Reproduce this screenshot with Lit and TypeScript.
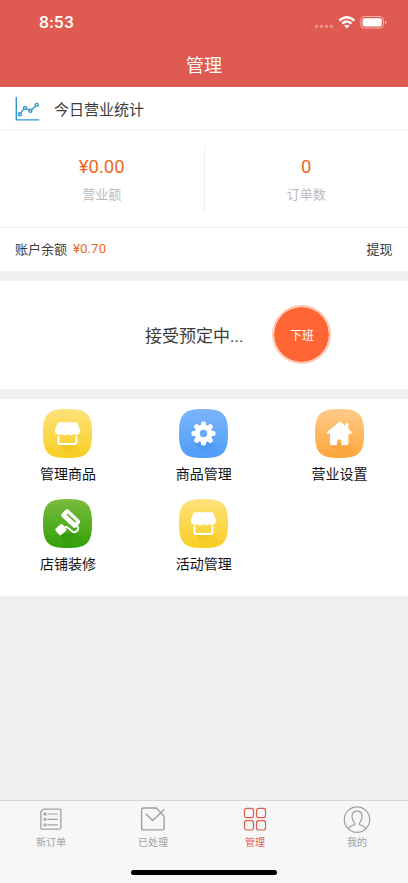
import { LitElement, html, css, svg } from "lit";
import { customElement, property } from "lit/decorators.js";
import { classMap } from "lit/directives/class-map.js";

const SQUIRCLE =
  "M24.5 0C44 0 49 5 49 24.5C49 44 44 49 24.5 49C5 49 0 44 0 24.5C0 5 5 0 24.5 0Z";

type Tile = { icon: string; label: string };

const FILLS: Record<string, [string, string, string]> = {
  shop: ["#fde27a", "#f8ce22", "#e9ba10"],
  gear: ["#7ab4fb", "#519dfa", "#4289e6"],
  home: ["#fecb8a", "#fda63a", "#ec9429"],
  paint: ["#79bc3c", "#33a109", "#268c08"],
};

const GLYPHS: Record<string, unknown> = {
  shop: svg`
    <path class="white" d="M16 13.3H32.8Q33.7 13.3 34.2 14.1L36.6 19.8Q37.1 21 36.9 22.3A3.9 3.7 0 0 1 30.5 24.9A4 3.7 0 0 1 24.4 24.9A4 3.7 0 0 1 18.3 24.9A3.9 3.7 0 0 1 11.9 22.3Q11.8 21 12.3 19.8L14.6 14.1Q15.1 13.3 16 13.3Z"/>
    <path class="line" stroke-width="2" d="M15.5 27.6V33.4Q15.5 34.9 17 34.9H31.9Q33.4 34.9 33.4 33.4V27.6"/>`,
  gear: svg`
    <g transform="translate(24.5 24.5)">
      ${[0, 45, 90, 135].map(
        (a) => svg`<rect class="white" x="-2.5" y="-12" width="5" height="24" rx="1.8" transform="rotate(${a})"/>`
      )}
      <circle class="white" r="8.9"/>
      <circle r="3.7" fill="#68a9fa"/>
    </g>`,
  home: svg`
    <path class="white" d="M25.5 12.8Q24.8 12.3 24.1 12.9L12.3 22.8Q11.6 23.5 12.2 24.2Q12.6 24.7 13.4 24.7H15V34.6Q15 36.3 16.6 36.3H21.9V32.3Q21.9 30.3 24.1 30.3Q26.4 30.3 26.4 32.3V36.3H31.9Q33.4 36.3 33.4 34.6V24.7H35.5Q36.4 24.7 36.8 24Q37.1 23.4 36.4 22.7L33.4 20V15.2Q33.4 14.2 32.4 14.2H31.3Q30.3 14.2 30.3 15.2V17.1Z"/>`,
  paint: svg`
    <g transform="translate(27.8 19.6) rotate(43)">
      <rect class="white" x="-9.8" y="-4.9" width="19.6" height="9.8" rx="2.6"/>
      <rect x="-6" y="-1.6" width="12" height="1.6" rx=".8" fill="#5aae25"/>
    </g>
    <path class="line" stroke-width="1.9" d="M34.4 27L35.2 28.9Q35.6 30.4 34.3 31.5L32.4 32.9Q31 33.7 29.7 32.7L24.7 28.6Q23.4 27.6 22 28.3L19.9 29.6"/>
    <rect class="white" x="-4.7" y="-4.2" width="9.4" height="8.4" rx="1.8" transform="translate(17.9 30.6) rotate(-40)"/>`,
};

@customElement("app-tile")
export class AppTile extends LitElement {
  @property() icon = "shop";
  @property() label = "";

  static styles = css`
    :host { display: flex; flex-direction: column; align-items: center; height: 90px; }
    svg { display: block; width: 49px; height: 49px; }
    .white { fill: #fff; }
    .line { fill: none; stroke: #fff; stroke-linecap: round; stroke-linejoin: round; }
    .label { margin-top: 6px; font-size: 14px; line-height: 20px; color: #111; }
  `;

  render() {
    const [top, bottom, shade] = FILLS[this.icon];
    return html`
      <svg viewBox="0 0 49 49">
        <defs>
          <linearGradient id="bg" x1="0" y1="0" x2="0" y2="1">
            <stop offset="0" stop-color=${top} />
            <stop offset="1" stop-color=${bottom} />
          </linearGradient>
          <linearGradient id="shade" x1="0" y1="0" x2=".45" y2="1">
            <stop offset="0" stop-color=${shade} stop-opacity=".6" />
            <stop offset="1" stop-color=${shade} stop-opacity="0" />
          </linearGradient>
        </defs>
        <path d=${SQUIRCLE} fill="url(#bg)" />
        <path d="M15.5 34.5L34 34.5L41 44Q36 48.5 25 48.5Z" fill="url(#shade)" />
        ${GLYPHS[this.icon]}
      </svg>
      <div class="label">${this.label}</div>
    `;
  }
}

const TAB_ICONS: Record<string, unknown> = {
  list: svg`
    <path stroke-width="1.3" d="M6.6 4.2H22.2Q23.9 4.2 23.9 5.7V22.7Q23.9 24.2 22.2 24.2H5.4Q3.9 24.2 3.9 22.7V6.6Z"/>
    ${[9, 14.4, 19.9].map(
      (y) => svg`<circle cx="8" cy=${y} r="1.1"/><path d="M10.9 ${y}H20.4"/>`
    )}`,
  done: svg`
    <path stroke-width="1.4" d="M21.6 7.6L18.2 3.7Q17.5 3 16.5 3H4.4Q2.6 3 2.6 4.8V23Q2.6 24.9 4.4 24.9H23.3Q25.1 24.9 25.1 23V11.5L22.6 8.4"/>
    <path stroke-width="1.4" d="M7 9L13.7 15.4L25 4.8"/>`,
  grid: svg`
    <rect x="3.5" y="3.3" width="9" height="9.3" rx="2.2"/>
    <rect x="15.5" y="3.3" width="9" height="9.3" rx="2.2"/>
    <rect x="3.5" y="15.7" width="9" height="9.3" rx="2.2"/>
    <rect x="15.5" y="15.7" width="9" height="9.3" rx="2.2"/>`,
  me: svg`
    <circle cx="14" cy="14.6" r="12.7"/>
    <path d="M5.4 23.7Q6.3 21.3 9.4 20.5Q11.8 19.9 11.9 18.9Q11.9 18.2 11.1 17.3Q9 14.7 9 11.3Q9 6.1 14 6.1Q19.1 6.1 19.1 11.3Q19.1 14.7 17 17.3Q16.2 18.2 16.2 18.9Q16.3 19.9 18.7 20.5Q21.8 21.3 22.7 23.7"/>`,
};

@customElement("app-root")
export class AppRoot extends LitElement {
  private tiles: Tile[] = [
    { icon: "shop", label: "管理商品" },
    { icon: "gear", label: "商品管理" },
    { icon: "home", label: "营业设置" },
    { icon: "paint", label: "店铺装修" },
    { icon: "shop", label: "活动管理" },
  ];

  private tabs = [
    { icon: "list", label: "新订单", active: false },
    { icon: "done", label: "已处理", active: false },
    { icon: "grid", label: "管理", active: true },
    { icon: "me", label: "我的", active: false },
  ];

  static styles = css`
    :host {
      display: flex;
      flex-direction: column;
      height: 100vh;
      overflow: hidden;
      background: #f0f0f0;
      color: #3c3c3c;
      font-family: Roboto, "Noto Sans CJK SC", sans-serif;
    }
    * { box-sizing: border-box; }
    svg { display: block; }
    .header { height: 87px; background: #df5a50; color: #fff; flex: none; }
    .status { height: 44px; display: flex; justify-content: space-between; align-items: center; padding: 1px 21px 0 39px; }
    .time { font: 600 15.5px/20px Inter, sans-serif; letter-spacing: 0.1px; }
    .title { height: 43px; line-height: 44px; text-align: center; font-size: 18px; }
    .card { background: #fff; flex: none; }
    .heading { height: 44px; display: flex; align-items: center; gap: 14px; padding: 0 15px; border-bottom: 1px solid #f0f0f0; font-size: 15px; }
    .stats { height: 97px; display: flex; align-items: center; border-bottom: 1px solid #eee; }
    .stat { flex: 1; text-align: center; height: 66px; padding-top: 9px; }
    .stat + .stat { border-left: 1px solid #eee; }
    .value { font-size: 18.5px; line-height: 24px; color: #ee6723; }
    .caption { font-size: 13px; line-height: 20px; margin-top: 6px; color: #bababa; }
    .balance { height: 43px; display: flex; align-items: center; padding: 0 15.5px 2px 15px; font-size: 13px; }
    .amount { color: #ee6723; margin-left: 6px; flex: 1; font-size: 13.4px; }
    .shift { height: 108px; margin-top: 10px; display: flex; align-items: center; gap: 29px; padding: 0 0 1px 145px; font-size: 17px; }
    .toggle { width: 59px; height: 59px; border: 2px solid #ffc9b5; border-radius: 50%; background: #ff6633; background-clip: padding-box; color: #fff; font-size: 12px; display: grid; place-items: center; }
    .tiles { height: 197px; margin-top: 10px; padding: 10px 0.5px 0 0; display: grid; grid-template-columns: repeat(3, 1fr); align-content: start; }
    .spacer { flex: 1; }
    .tabbar { height: 83px; flex: none; background: #f7f7f7; border-top: 1px solid #d6d6d6; display: flex; flex-direction: column; align-items: center; }
    .tabs { display: flex; width: 100%; height: 69px; padding-top: 4px; }
    .tab { flex: 1; display: flex; flex-direction: column; align-items: center; color: #a0a0a0; font-size: 10px; line-height: 14px; }
    .tab svg { width: 28px; height: 28px; margin-bottom: 3px; fill: none; stroke: currentColor; stroke-width: 1.2; stroke-linecap: round; stroke-linejoin: round; }
    .tab.active { color: #df5a50; }
    .indicator { width: 146px; height: 5px; border-radius: 3px; background: #000; }
  `;

  render() {
    return html`
      <header class="header">
        <div class="status">
          <span class="time">8:53</span>
          <svg width="73" height="16" viewBox="0 0 73 16">
            <g fill="#fff" fill-opacity=".35">
              <circle cx="2.5" cy="11.4" r="1.7" /><circle cx="7.5" cy="11.4" r="1.7" />
              <circle cx="12.5" cy="11.4" r="1.7" /><circle cx="17.4" cy="11.4" r="1.7" />
            </g>
            <g fill="none" stroke="#fff" stroke-width="2.3">
              <path d="M25.4 5.6Q32.8 -1.2 40.3 5.6" />
              <path d="M28.2 8.6Q32.8 4.4 37.5 8.6" />
            </g>
            <path d="M30.2 10.8Q32.8 8.7 35.5 10.8L32.8 13.5Z" fill="#fff" />
            <rect x="46.9" y="1.5" width="22.6" height="11.6" rx="3.4" fill="none" stroke="#fff" stroke-opacity=".5" />
            <rect x="48.6" y="3.2" width="19.2" height="8.2" rx="1.9" fill="#fff" />
            <path d="M71 5.4Q72.5 6 72.5 7.3T71 9.2Z" fill="#fff" fill-opacity=".55" />
          </svg>
        </div>
        <div class="title">管理</div>
      </header>

      <section class="card">
        <div class="heading">
          <svg width="25" height="26" viewBox="0 0 25 26" fill="none" stroke="#2e97d4" stroke-width="1.4">
            <path d="M1.3 1V23.9H24.3" />
            <path d="M5.7 16.9L9.2 12.6M11.3 12.5L14.1 14.2M16.6 13.8L20.6 10" />
            <circle cx="4.9" cy="18.2" r="1.5" /><circle cx="10" cy="11.9" r="1.5" />
            <circle cx="15.4" cy="14.8" r="1.5" /><circle cx="21.7" cy="8.9" r="1.5" />
          </svg>
          <span>今日营业统计</span>
        </div>
        <div class="stats">
          <div class="stat"><div class="value">¥0.00</div><div class="caption">营业额</div></div>
          <div class="stat"><div class="value">0</div><div class="caption">订单数</div></div>
        </div>
        <div class="balance">
          <span>账户余额</span><span class="amount">¥0.70</span><span>提现</span>
        </div>
      </section>

      <section class="card shift">
        <span>接受预定中...</span>
        <div class="toggle">下班</div>
      </section>

      <section class="card tiles">
        ${this.tiles.map((t) => html`<app-tile icon=${t.icon} label=${t.label}></app-tile>`)}
      </section>

      <div class="spacer"></div>

      <nav class="tabbar">
        <div class="tabs">
          ${this.tabs.map(
            (t) => html`
              <div class=${classMap({ tab: true, active: t.active })}>
                <svg viewBox="0 0 28 28">${TAB_ICONS[t.icon]}</svg>
                <span>${t.label}</span>
              </div>
            `
          )}
        </div>
        <div class="indicator"></div>
      </nav>
    `;
  }
}
